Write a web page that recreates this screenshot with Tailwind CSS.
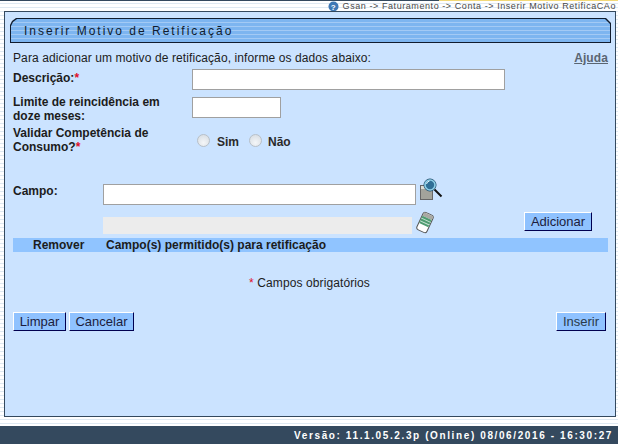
<!DOCTYPE html>
<html lang="pt">
<head>
  <meta charset="UTF-8" />
  <title>Inserir Motivo de Retificação</title>
  <script src="https://cdn.jsdelivr.net/npm/@tailwindcss/browser@4"></script>
</head>
<body class="w-[618px] h-[444px] overflow-hidden bg-[repeating-linear-gradient(180deg,#ffffff_0px,#ffffff_3px,#dfe9f2_3px,#dfe9f2_4px)] font-['Liberation_Sans',Arial,sans-serif] text-[12px] text-[#1c1c1c] flex flex-col">
  <div class="h-[1px] bg-[linear-gradient(90deg,#34495e_0px,#34495e_439px,#f2d878_439px)]"></div>
  <div class="h-[10px] flex justify-end items-center pr-[2px] text-[9px] text-[#4a4a4a] tracking-[0.57px] gap-[2px]">
    <svg class="mr-[2px]" width="11" height="11" viewBox="0 0 11 11"><circle cx="5.5" cy="5.5" r="5" fill="#3f78b5"/><text x="5.5" y="8.5" text-anchor="middle" font-size="8" font-weight="700" fill="#fff">?</text></svg>
    <span class="mt-[1px]">Gsan -&gt; Faturamento -&gt; Conta -&gt; Inserir Motivo RetificaCAo</span>
  </div>
  <main class="ml-[4px] w-[612px] h-[406px] bg-[#cbe3ff] border border-[#34495e] pl-[5px] pr-[4px] pt-[6px] flex flex-col tracking-[0.1px]">
    <div class="h-[25px] w-[601px] p-[1px] bg-[#101c2e] [clip-path:polygon(6px_0,calc(100%-5px)_0,100%_5px,100%_100%,0_100%,0_7px,2px_3px)]">
      <div class="h-full bg-[repeating-linear-gradient(180deg,#7db5f0_0px,#7db5f0_3px,#a3caf5_3px,#a3caf5_4px)] [clip-path:polygon(6px_0,calc(100%-5px)_0,100%_5px,100%_100%,0_100%,0_7px,2px_3px)] flex items-center pl-[13px] text-[12px] tracking-[2px] text-[#101c2e]">Inserir Motivo de Retificação</div>
    </div>
    <div class="flex justify-between items-start pl-[3px] pr-[3px] mt-[6px] h-[16px]">
      <span>Para adicionar um motivo de retificação, informe os dados abaixo:</span>
      <span class="font-bold underline text-[#5a6572]">Ajuda</span>
    </div>
    <div class="flex items-start pl-[3px] mt-[4px] h-[24px]">
      <label class="w-[179px] font-bold tracking-normal">Descrição:<span class="text-[#e0102a]">*</span></label>
      <input class="w-[313px] h-[21px] bg-white border border-[#a0a0a0]" />
    </div>
    <div class="flex items-start pl-[3px] mt-[4px] h-[30px]">
      <label class="w-[160px] mr-[19px] -mt-[2px] font-bold leading-[14px] tracking-normal">Limite de reincidência em doze meses:</label>
      <input class="w-[89px] h-[21px] bg-white border border-[#a0a0a0]" />
    </div>
    <div class="flex items-center pl-[3px] mt-[1px] h-[28px]">
      <label class="w-[179px] font-bold leading-[14px] tracking-normal -mt-[5px]">Validar Competência de Consumo?<span class="text-[#e0102a]">*</span></label>
      <div class="flex items-center font-bold ml-[5px] tracking-normal">
        <span class="w-[13px] h-[13px] -mt-[4px] rounded-full border border-[#b8c0c8] bg-[radial-gradient(circle_at_50%_70%,#f4f6f8,#d4dae0)]"></span>
        <span class="ml-[7px] text-[#2a2a2a]">Sim</span>
        <span class="ml-[10px] w-[13px] h-[13px] -mt-[4px] rounded-full border border-[#b8c0c8] bg-[radial-gradient(circle_at_50%_70%,#f4f6f8,#d4dae0)]"></span>
        <span class="ml-[6px] text-[#2a2a2a]">Não</span>
      </div>
    </div>
    <div class="flex items-start pl-[3px] mt-[28px] h-[33px]">
      <label class="w-[90px] font-bold -mt-[2px] tracking-normal">Campo:</label>
      <input class="w-[313px] h-[21px] bg-white border border-[#a0a0a0]" />
      <svg class="ml-[3px] -mt-[6px]" width="24" height="24" viewBox="0 0 24 24"><rect x="1.5" y="7.5" width="12" height="14" fill="#a3a39b" stroke="#666"/><path d="M2 8h11v3H2z" fill="#dcdcd4"/><circle cx="11" cy="7" r="6" fill="#2f6f96" stroke="#1d4a68"/><circle cx="11" cy="7" r="5" fill="none" stroke="#8fd0e8" stroke-width="1.6"/><path d="M7.5 6a4 4 0 0 1 3-3" stroke="#e6f6fc" fill="none"/><path d="M15.5 11.5l7 7" stroke="#111" stroke-width="2"/></svg>
    </div>
    <div class="flex items-start pl-[93px] h-[21px]">
      <div class="w-[309px] h-[17px] bg-[#ececec]"></div>
      <svg class="ml-[4px] -mt-[6px]" width="18" height="23" viewBox="0 0 18 23"><g transform="rotate(25 9 11.5)"><rect x="3.5" y="2" width="11" height="19" rx="2.5" fill="#fff" stroke="#555"/><rect x="4" y="2.5" width="10" height="4" fill="#a9a9a3"/><rect x="4" y="6.5" width="10" height="8" fill="#4f9b72"/><path d="M4 9h10M4 12h10" stroke="#c9e6d5"/></g></svg>
      <button class="ml-[90px] -mt-[5px] w-[68px] h-[19px] bg-[#8fc2ff] border border-t-white border-l-white border-r-[#000050] border-b-[#000050] text-[13px] leading-none tracking-normal text-[#1c1c3c]">Adicionar</button>
    </div>
    <div class="ml-[3px] w-[595px] h-[14px] bg-[#90c4ff] flex items-center font-bold tracking-normal">
      <span class="w-[93px] pl-[20px]">Remover</span>
      <span>Campo(s) permitido(s) para retificação</span>
    </div>
    <div class="mt-[22px] -ml-[2px] text-center h-[14px]"><span class="text-[#e0102a]">*</span> Campos obrigatórios</div>
    <div class="flex justify-between pl-[3px] pr-[5px] mt-[24px]">
      <div class="flex gap-[3px]">
        <button class="w-[53px] h-[19px] bg-[#8fc2ff] border border-t-white border-l-white border-r-[#000050] border-b-[#000050] text-[13px] leading-none tracking-normal text-[#1c1c3c]">Limpar</button>
        <button class="w-[65px] h-[19px] bg-[#8fc2ff] border border-t-white border-l-white border-r-[#000050] border-b-[#000050] text-[13px] leading-none tracking-normal text-[#1c1c3c]">Cancelar</button>
      </div>
      <button class="w-[50px] h-[19px] bg-[#8fc2ff] border border-t-white border-l-white border-r-[#000050] border-b-[#000050] text-[13px] leading-none tracking-normal text-[#2a3a4a]">Inserir</button>
    </div>
  </main>
  <footer class="mt-[9px] h-[18px] bg-[#34495e] flex items-center justify-end pr-[5px] text-white font-bold text-[10px] tracking-[1.61px]">Versão: 11.1.05.2.3p (Online) 08/06/2016 - 16:30:27</footer>
</body>
</html>
